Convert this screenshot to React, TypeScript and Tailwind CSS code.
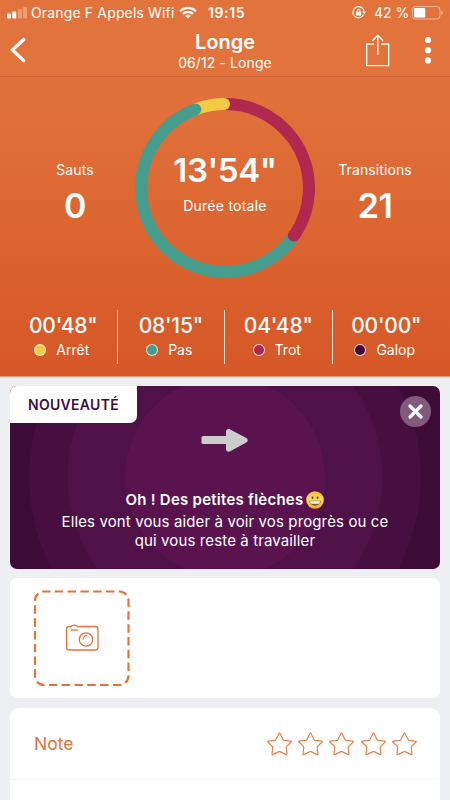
import React from "react";

interface Gait {
  time: string;
  label: string;
  dot: string;
}

const gaits: Gait[] = [
  { time: "00'48\"", label: "Arrêt", dot: "bg-[#f2cb43]" },
  { time: "08'15\"", label: "Pas", dot: "bg-[#469d8d]" },
  { time: "04'48\"", label: "Trot", dot: "bg-[#b0274f]" },
  { time: "00'00\"", label: "Galop", dot: "bg-[#3f0a38]" },
];

function StatusBar() {
  return (
    <div className="flex h-[25px] items-center pl-[7px] pr-[6px] text-[14px] leading-[25px]">
      <svg width="20" height="12" viewBox="0 0 20 12" fill="#fff">
        <rect x="0" y="6.5" width="4" height="5" rx="1" />
        <rect x="5.3" y="4.5" width="4" height="7" rx="1" />
        <rect x="11" y="2" width="4" height="9.5" rx="1" opacity="0.3" />
        <rect x="16" y="0" width="4" height="11.5" rx="1" opacity="0.3" />
      </svg>
      <span className="ml-[4px] w-[144px] whitespace-nowrap tracking-[0.15px]">Orange F Appels Wifi</span>
      <svg className="ml-[4px]" width="18" height="13" viewBox="0 0 18 13" fill="none" stroke="#fff" strokeWidth="2.2">
        <path d="M1.2 5.2a11 11 0 0 1 15.6 0" />
        <path d="M4 8a7 7 0 0 1 10 0" />
        <path d="M9 12.6L6.2 9.8a4 4 0 0 1 5.6 0z" fill="#fff" stroke="none" />
      </svg>
      <span className="ml-[11px] font-semibold tracking-[0.6px]">19:15</span>
      <div className="ml-auto flex items-center">
        <svg width="14" height="13" viewBox="0 0 14 13" fill="none" stroke="#fff" strokeWidth="1.1">
          <path d="M11.6 8.6a5.6 5.6 0 1 1 .5-3" />
          <path d="M10.2 5.4h3.8l-1.9 2.6z" fill="#fff" stroke="none" />
          <rect x="4.1" y="5.6" width="5" height="3.8" rx="0.5" fill="#fff" stroke="none" />
          <path d="M5.2 5.8V4.7a1.4 1.4 0 0 1 2.8 0v1.1" />
        </svg>
        <span className="ml-[8px] w-[34px] whitespace-nowrap">42 %</span>
        <svg className="ml-[4px]" width="32" height="14" viewBox="0 0 32 14">
          <rect x="0.5" y="0.5" width="27.500" height="12.500" rx="3.2" fill="none" stroke="#fff" strokeOpacity="0.45" />
          <rect x="2" y="2" width="11.3" height="9.500" rx="1" fill="#fff" />
          <path d="M29.3 4.6c2 .6 2 3.8 0 4.4z" fill="#fff" opacity="0.45" />
        </svg>
      </div>
    </div>
  );
}

function NavBar() {
  return (
    <div className="flex h-[52px] items-center justify-between border-b border-[#c9603a] pl-[9px] pr-[17px]">
      <div className="w-[75px]">
        <svg width="18" height="27" viewBox="0 0 18 27" fill="none" stroke="#fff" strokeWidth="3.3">
          <path d="M14.700 2.500L3.400 13l11.300 10.600" strokeLinecap="round" />
        </svg>
      </div>
      <div className="pt-[2px] text-center">
        <h1 className="text-[20px] font-[560] leading-[21px]">Longe</h1>
        <p className="text-[14px] leading-[19px] tracking-[0.1px]">06/12 - Longe</p>
      </div>
      <div className="flex w-[67px] items-center justify-between">
        <svg width="24" height="33" viewBox="0 0 24 33" fill="none" stroke="#fff" strokeWidth="1.3">
          <path d="M8 10H.7v21.7h22V10H15" />
          <path d="M11.8 21V1.5M6.5 6.7l5.300-5.400 5.300 5.400" />
        </svg>
        <svg className="mr-[1px]" width="8" height="28" viewBox="0 0 8 28" fill="#fff">
          <circle cx="4" cy="3" r="3.100" />
          <circle cx="4" cy="13.200" r="3.100" />
          <circle cx="4" cy="23.400" r="3.100" />
        </svg>
      </div>
    </div>
  );
}

function Ring() {
  return (
    <div className="relative h-[180px] w-[180px]">
      <svg width="180" height="180" viewBox="0 0 180 180" fill="none" strokeWidth="12">
        <path d="M60.3 11.400A84 84 0 0 1 90 6" stroke="#f2cb43" />
        <path d="M159.4 137.300A84 84 0 1 1 60.300 11.400" stroke="#469d8d" strokeLinecap="round" />
        <path d="M90 6A84 84 0 0 1 159.400 137.300" stroke="#b0274f" />
        <circle cx="158.8" cy="137.500" r="6" fill="#b0274f" />
        <circle cx="89" cy="6" r="6" fill="#f2cb43" />
      </svg>
      <div className="absolute inset-0 flex flex-col items-center pt-[52px]">
        <span className="text-[33px] font-[560] leading-[40px] tracking-[-0.4px]">13'54"</span>
        <span className="mt-[6px] text-[14px] leading-[20px] tracking-[0.25px]">Durée totale</span>
      </div>
    </div>
  );
}

function SideStat({ label, value }: { label: string; value: string }) {
  return (
    <div className="flex w-[100px] flex-col items-center pt-[62px]">
      <span className="text-[14px] leading-[20px] tracking-[0.1px]">{label}</span>
      <span className="mt-[6px] text-[34px] font-[560] leading-[40px] tracking-[-0.5px]">{value}</span>
    </div>
  );
}

function Smiley() {
  return (
    <svg className="ml-[3px]" width="18" height="18" viewBox="0 0 18 18">
      <defs>
        <linearGradient id="smiley" x1="0" y1="0" x2="0" y2="1">
          <stop offset="0" stopColor="#f3b93f" />
          <stop offset="0.5" stopColor="#fbdc62" />
          <stop offset="1" stopColor="#eda534" />
        </linearGradient>
      </defs>
      <circle cx="9" cy="9" r="8.8" fill="url(#smiley)" />
      <ellipse cx="6.5" cy="6.800" rx="0.900" ry="1.300" fill="#5e3a10" />
      <ellipse cx="11.5" cy="6.800" rx="0.900" ry="1.300" fill="#5e3a10" />
      <path d="M3.2 9.8h11.6a5.8 5 0 0 1-11.6 0z" fill="#8a5a20" />
      <path d="M3.8 10.200h10.400l-.9 2.500h-8.600z" fill="#fff" />
    </svg>
  );
}

function NewsCard() {
  return (
    <section className="relative h-[183px] shrink-0 overflow-hidden rounded-[7px] bg-[#3c0b36] text-white">
      <svg className="absolute inset-0" width="430" height="183" viewBox="0 0 430 183">
        <circle cx="215" cy="91" r="196" fill="#460f40" />
        <circle cx="215" cy="91" r="157.5" fill="#4f1148" />
        <circle cx="215" cy="91" r="100" fill="#5a134f" />
      </svg>
      <div className="absolute left-0 top-0 h-[37px] w-[127px] rounded-br-[7px] bg-white text-center text-[14px] font-[560] leading-[38px] tracking-[0.3px] text-[#430d3d]">
        NOUVEAUTÉ
      </div>
      <button className="absolute right-[9px] top-[10px] flex h-[31px] w-[31px] items-center justify-center rounded-full bg-[#82597c]">
        <svg width="15" height="15" viewBox="0 0 15 15" stroke="#fff" strokeWidth="3.2" strokeLinecap="round">
          <path d="M2 2l11 11M13 2L2 13" />
        </svg>
      </button>
      <div className="relative flex flex-col items-center pt-[43px]">
        <svg width="48" height="24" viewBox="0 0 48 24" fill="#cccccc">
          <rect x="0.500" y="7" width="28" height="8" rx="1.5" />
          <path d="M25 3c0-2.500 2-3.600 4.200-2.500l15.700 8.200c2.500 1.300 2.500 3.700 0 5l-15.700 8.500c-2.200 1.100-4.200 .2-4.200-2.300z" />
        </svg>
        <p className="mt-[37px] flex h-[20px] items-center text-[15px] font-[560] leading-[20px] tracking-[0.25px]">
          Oh ! Des petites flèches
          <Smiley />
        </p>
        <p className="mt-[3px] whitespace-nowrap text-center text-[15px] leading-[18.5px] tracking-[0.12px]">
          Elles vont vous aider à voir vos progrès ou ce
          <br />
          qui vous reste à travailler
        </p>
      </div>
    </section>
  );
}

function PhotoCard() {
  return (
    <section className="h-[120px] shrink-0 rounded-[7px] bg-white pl-[23px] pt-[12px]">
      <svg width="98" height="97" viewBox="0 0 98 97" fill="none" stroke="#e2733c">
        <rect
          x="2"
          y="1.500"
          width="93.500"
          height="93.500"
          rx="9"
          strokeWidth="2.200"
          strokeDasharray="8.500 4.300"
          strokeDashoffset="2"
        />
        <g strokeWidth="1.300">
          <path d="M37.500 36.500h-1.500a2.500 2.500 0 0 0-2.500 2.500v18.500a2.500 2.500 0 0 0 2.500 2.500h26.500a2.500 2.500 0 0 0 2.500-2.500V39a2.500 2.500 0 0 0-2.500-2.500H44.500c-.7 0-.8-1.300-3.300-1.300s-2.600 1.300-3.700 1.300z" />
          <path d="M38 40h7" />
          <circle cx="53" cy="49.500" r="6.700" />
          <path d="M50 49.500a4.200 4.200 0 0 1 4.300-4" />
        </g>
      </svg>
    </section>
  );
}

function Star() {
  return (
    <svg width="25" height="24" viewBox="0 0 25 24" fill="none" stroke="#e58052" strokeWidth="1.2" strokeLinejoin="round">
      <path d="M12.100 1.300q.4-.8.800 0l3.300 6.500q.2.400.7.500l6.900.8q.8.200.3.900L19.400 14.600q-.3.400-.2.900l.8 6.600q0 .8-.8.500l-6.200-3q-.5-.2-1 0l-6.200 3q-.8.300-.8-.5l.8-6.600q.1-.5-.2-.9L.9 10q-.5-.7.300-.9l6.900-.8q.5-.1.700-.5z" />
    </svg>
  );
}

export default function App() {
  return (
    <div className="flex h-[800px] w-[450px] flex-col overflow-hidden bg-[#eeeff3] font-[Inter,sans-serif] text-white">
      <header className="h-[377px] shrink-0 border-b border-[#e29a7c] bg-linear-to-b from-[#e2733c] from-20% to-[#d65727]">
        <StatusBar />
        <NavBar />
        <div className="flex justify-between px-[25px] pt-[21px]">
          <SideStat label="Sauts" value="0" />
          <Ring />
          <SideStat label="Transitions" value="21" />
        </div>
        <div className="mx-[10px] mt-[32px] grid h-[54px] grid-cols-4 divide-x divide-white/80">
          {gaits.map((gait) => (
            <div key={gait.label} className="flex flex-col items-center pt-[4px]">
              <span className="text-[21px] font-[540] leading-[24px] tracking-[-0.2px]">{gait.time}</span>
              <div className="mt-[2px] flex items-center gap-[10px] pr-[3px] text-[14px] leading-[20px]">
                <span className={`h-[12px] w-[12px] rounded-full border border-white/80 ${gait.dot}`} />
                {gait.label}
              </div>
            </div>
          ))}
        </div>
      </header>
      <main className="flex flex-1 flex-col px-[10px] pt-[9px]">
        <NewsCard />
        <div className="h-[9px] shrink-0" />
        <PhotoCard />
        <section className="mt-[10px] h-[120px] shrink-0 rounded-t-[9px] bg-white">
          <div className="flex h-[72px] items-center justify-between border-b border-[#f5f5f7] pl-[24px] pr-[23px]">
            <span className="pt-[2px] text-[17.500px] text-[#e2733c]">Note</span>
            <div className="flex gap-[6.300px]">
              {[1, 2, 3, 4, 5].map((n) => (
                <Star key={n} />
              ))}
            </div>
          </div>
        </section>
      </main>
    </div>
  );
}
